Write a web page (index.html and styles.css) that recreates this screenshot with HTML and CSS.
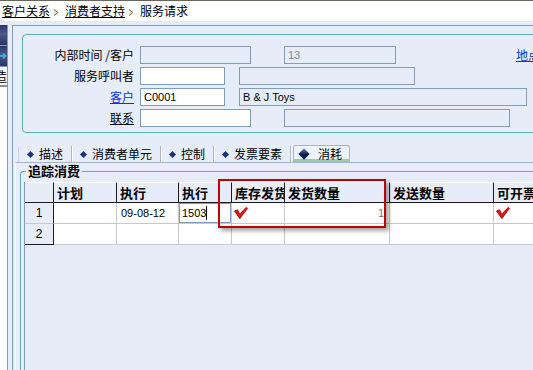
FILE: index.html
```html
<!DOCTYPE html>
<html lang="zh">
<head>
    <meta charset="UTF-8">
    <title>服务请求</title>
    <link rel="stylesheet" href="styles.css">
</head>
<body>
    <div class="crumbs">
        <a href="#">客户关系</a>
        <svg class="crumb-sep" width="6" height="7" viewBox="0 0 6 7"><path d="M1 0.5 L5 3.5 L1 6.5" fill="#e8e4c8" stroke="#6e6e58" stroke-width="1"/></svg>
        <a href="#">消费者支持</a>
        <svg class="crumb-sep" width="6" height="7" viewBox="0 0 6 7"><path d="M1 0.5 L5 3.5 L1 6.5" fill="#e8e4c8" stroke="#6e6e58" stroke-width="1"/></svg>
        <span>服务请求</span>
    </div>

    <div class="main">
        <div class="nav">
            <div class="nav-btn"></div>
            <div class="nav-btn">
                <svg width="7" height="8" viewBox="0 0 7 8"><path d="M0 4 L5 4 M3 1.5 L5.5 4 L3 6.5" stroke="#3fc0f0" stroke-width="1.5" fill="none"/></svg>
            </div>
            <div class="nav-tab"><span>造</span></div>
        </div>

        <div class="content">
            <div class="form-panel">
                <div class="form-row">
                    <span class="form-label">内部时间 /客户</span>
                    <div class="field off w111"></div>
                    <div class="field off w112 far">13</div>
                    <a class="loc" href="#">地点</a>
                </div>
                <div class="form-row">
                    <span class="form-label">服务呼叫者</span>
                    <div class="field w85"></div>
                    <div class="field off w176 near"></div>
                </div>
                <div class="form-row">
                    <a class="form-label link" href="#">客户</a>
                    <div class="field w85">C0001</div>
                    <div class="field off w288 near">B &amp; J Toys</div>
                </div>
                <div class="form-row">
                    <a class="form-label plain" href="#">联系</a>
                    <div class="field w111"></div>
                    <div class="field off w226 far"></div>
                </div>
            </div>

            <div class="tabs">
                <div class="tab"><i class="dot"></i>描述</div>
                <div class="tab"><i class="dot"></i>消费者单元</div>
                <div class="tab"><i class="dot"></i>控制</div>
                <div class="tab"><i class="dot"></i>发票要素</div>
                <div class="tab active"><i class="dot big"></i>消耗</div>
            </div>

            <div class="tab-page">
                <div class="group">
                    <div class="group-title">追踪消费</div>
                    <div class="grid-wrap">
                        <table class="grid">
                            <thead>
                                <tr>
                                    <th class="c-row"></th>
                                    <th class="c-plan">计划</th>
                                    <th class="c-run">执行</th>
                                    <th class="c-run2">执行</th>
                                    <th class="c-stock">库存发货</th>
                                    <th class="c-qty">发货数量</th>
                                    <th class="c-send">发送数量</th>
                                    <th class="c-bill">可开票</th>
                                </tr>
                            </thead>
                            <tbody>
                                <tr>
                                    <td class="rowhead">1</td>
                                    <td></td>
                                    <td>09-08-12</td>
                                    <td class="editing"><div class="editor">1503<span class="caret"></span></div></td>
                                    <td><svg class="check" width="14" height="12" viewBox="0 0 14 12"><path d="M0.5 4 L3.6 2.8 L5.6 7.2 L12.2 0.4 L13.4 1.6 L5.8 11.5 Z" fill="#e41a14" stroke="#9c0000" stroke-width="0.9" stroke-linejoin="round"/></svg></td>
                                    <td class="num">1</td>
                                    <td></td>
                                    <td><svg class="check" width="14" height="12" viewBox="0 0 14 12"><path d="M0.5 4 L3.6 2.8 L5.6 7.2 L12.2 0.4 L13.4 1.6 L5.8 11.5 Z" fill="#e41a14" stroke="#9c0000" stroke-width="0.9" stroke-linejoin="round"/></svg></td>
                                </tr>
                                <tr class="last">
                                    <td class="rowhead">2</td>
                                    <td></td>
                                    <td></td>
                                    <td></td>
                                    <td></td>
                                    <td></td>
                                    <td></td>
                                    <td></td>
                                </tr>
                            </tbody>
                        </table>
                    </div>
                </div>
            </div>
        </div>
    </div>

    <div class="callout"></div>
</body>
</html>
```

FILE: styles.css
```css
* {
    margin: 0;
    padding: 0;
    box-sizing: border-box;
}

:root {
    --panel: #e6edf8;
    --edge: #7f9db9;
    --teal: #56afb3;
    --link: #0038d0;
}

html, body {
    height: 100%;
}

body {
    font-family: "Noto Sans CJK SC", sans-serif;
    font-size: 12px;
    line-height: 14px;
    color: #000;
    background: var(--panel);
    display: flex;
    flex-direction: column;
    overflow: hidden;
}

/* breadcrumb */
.crumbs {
    height: 22px;
    background: #fff;
    border-top: 1px solid #66665a;
    border-bottom: 1px solid #ece9d8;
    padding: 3px 0 0 2px;
    display: flex;
    align-items: flex-start;
    white-space: nowrap;
}

.crumbs a {
    color: #000;
    text-decoration: underline;
}

.crumb-sep {
    margin: 5px 6px 0 3px;
}

.main {
    flex: 1;
    display: flex;
    padding-top: 3px;
    min-height: 0;
}

/* left nav strip */
.nav {
    width: 8px;
    flex-shrink: 0;
    background: #fff;
    border-right: 1px solid var(--edge);
    display: flex;
    flex-direction: column;
}

.nav-btn {
    height: 21px;
    background: linear-gradient(#2a3768, #4d5988 45%, #2b3566);
    border-bottom: 1px solid #8a93b8;
    display: flex;
    align-items: center;
}

.nav-tab {
    height: 20px;
    overflow: hidden;
    border-bottom: 2px solid #8c8c8c;
    background: #fff;
    font-size: 13px;
    line-height: 18px;
}

.nav-tab span {
    display: block;
    margin-left: -6px;
}

.content {
    flex: 1;
    margin-left: 4px;
    border-top: 1px solid var(--edge);
    border-left: 1px solid var(--edge);
    display: flex;
    flex-direction: column;
    overflow: hidden;
    min-width: 0;
}

/* header form */
.form-panel {
    margin: 8px -12px 0 9px;
    border: 1px solid var(--teal);
    border-radius: 4px 0 0 4px;
    padding: 11px 0 5px 0;
    display: flex;
    flex-direction: column;
    gap: 3px;
}

.form-row {
    display: flex;
    align-items: center;
    height: 18px;
    white-space: nowrap;
}

.form-label {
    width: 111px;
    margin-right: 6px;
    text-align: right;
    flex-shrink: 0;
    color: #000;
    text-decoration: none;
}

.form-label.link {
    color: var(--link);
    text-decoration: underline;
}

.form-label.plain {
    text-decoration: underline;
}

.field {
    height: 18px;
    border: 1px solid var(--edge);
    background: #fff;
    flex-shrink: 0;
    font-family: "Liberation Sans", "DejaVu Sans", sans-serif;
    font-size: 11px;
    line-height: 16px;
    padding-left: 3px;
}

.field.off {
    background: var(--panel);
    color: #000;
}

.field.w112.far {
    color: #8a8a8a;
}

.w85 { width: 85px; }
.w111 { width: 111px; }
.w112 { width: 112px; }
.w176 { width: 176px; }
.w226 { width: 226px; }
.w288 { width: 288px; }

.far { margin-left: 33px; }
.near { margin-left: 14px; }

.loc {
    margin-left: 120px;
    color: var(--link);
    text-decoration: underline;
    flex-shrink: 0;
}

/* tabs */
.tabs {
    display: flex;
    margin: 13px 0 0 5px;
    height: 16px;
    white-space: nowrap;
}

.tab {
    display: flex;
    align-items: center;
    padding: 0 8px 0 9px;
    gap: 6px;
    border-right: 1px solid #a8b6c8;
    box-shadow: 1px 0 0 #fff;
}

.tab:first-child {
    border-left: 1px solid #c8d2e0;
    border-radius: 4px 0 0 0;
}

.dot {
    width: 5px;
    height: 5px;
    background: #1c3578;
    transform: rotate(45deg);
    flex-shrink: 0;
}

.tab.active {
    margin-left: 2px;
    padding: 0 7px 0 6px;
    gap: 10px;
    background: #eef2f9;
    border: 1px solid #a8b4c4;
    border-bottom: none;
    border-radius: 3px 3px 0 0;
    box-shadow: inset 0 -3px 0 #9ccaa6;
    height: 17px;
    margin-top: -1px;
}

.dot.big {
    width: 8px;
    height: 8px;
    background: linear-gradient(135deg, #7a86aa, #0c1a52 55%);
}

/* tab page + group */
.tab-page {
    flex: 1;
    margin: 0 -12px 0 2px;
    border-top: 1px solid #9fb3cc;
    border-left: 1px solid #fff;
    display: flex;
    flex-direction: column;
}

.group {
    flex: 1;
    margin: 8px 0 0 4px;
    border-top: 1px solid var(--teal);
    border-left: 1px solid var(--teal);
    border-radius: 4px 0 0 0;
    display: flex;
    flex-direction: column;
}

.group-title {
    align-self: flex-start;
    margin: -8px 0 0 5px;
    padding: 0 2px;
    height: 14px;
    background: var(--panel);
    font-weight: bold;
    font-size: 13px;
}

.grid-wrap {
    flex: 1;
    margin: 4px 0 0 3px;
    border-left: 1px solid var(--edge);
    overflow: hidden;
}

.grid {
    border-collapse: separate;
    border-spacing: 0;
    table-layout: fixed;
    width: 549px;
}

.grid th,
.grid td {
    height: 21px;
    overflow: hidden;
    white-space: nowrap;
    box-sizing: border-box;
}

.grid th {
    text-align: left;
    font-weight: bold;
    font-size: 13px;
    padding-left: 3px;
    background: var(--panel);
    border-top: 1px solid #fff;
    border-right: 1px solid #1a1a1a;
    border-bottom: 1px solid #1a1a1a;
    text-overflow: clip;
}

.c-row { width: 29px; }
.c-plan { width: 63px; }
.c-run { width: 62px; }
.c-run2 { width: 53px; }
.c-stock { width: 53px; }
.c-qty { width: 105px; }
.c-send { width: 104px; }
.c-bill { width: 80px; }

.grid td {
    background: #fff;
    border-right: 1px solid #c8c8c8;
    border-bottom: 1px solid #c8c8c8;
    font-family: "Liberation Sans", "DejaVu Sans", sans-serif;
    font-size: 11px;
    padding-left: 4px;
}

.grid td.rowhead {
    background: var(--panel);
    text-align: center;
    padding-left: 0;
    font-size: 12px;
    border-right: 1px solid #1a1a1a;
}

.grid tr.last td.rowhead {
    border-bottom: 1px solid #1a1a1a;
}

.grid td.editing {
    padding: 0;
}

.editor {
    height: 20px;
    border: 1px solid var(--edge);
    padding-left: 2px;
    line-height: 18px;
    display: flex;
    align-items: center;
}

.caret {
    width: 1px;
    height: 14px;
    background: #000;
}

.grid td.num {
    text-align: right;
    padding-right: 5px;
    color: #777;
}

.check {
    display: block;
    margin-left: -2px;
}

/* red annotation box */
.callout {
    position: absolute;
    left: 218px;
    top: 179px;
    width: 168px;
    height: 49px;
    border: 2px solid #c00008;
    box-shadow: 3px 3px 4px rgba(0, 0, 0, 0.35);
}
```
